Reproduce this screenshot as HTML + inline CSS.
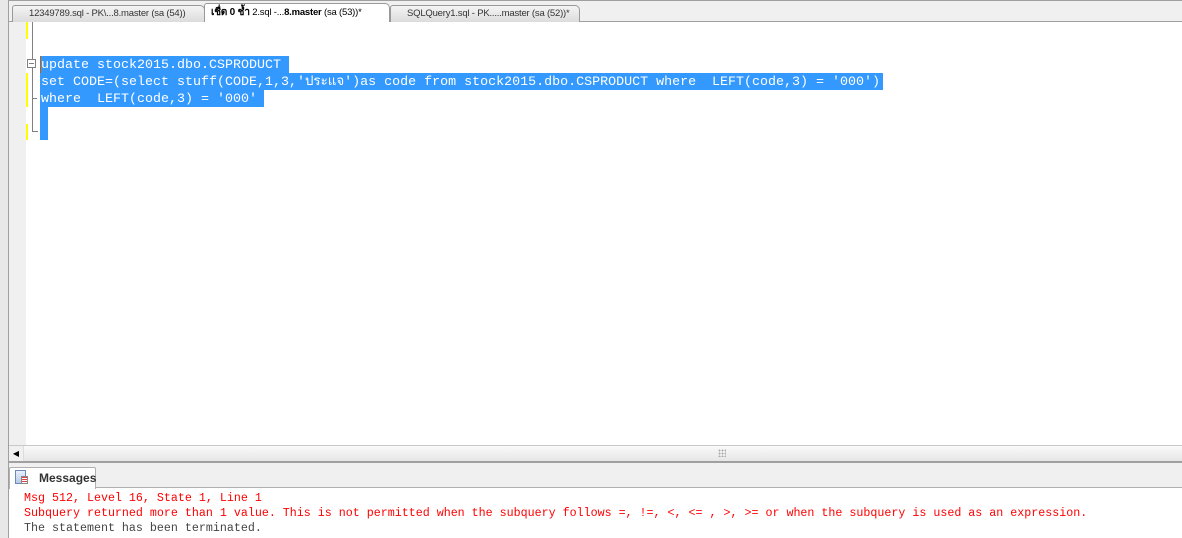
<!DOCTYPE html>
<html><head><style>
*{margin:0;padding:0;box-sizing:border-box}
body{width:1182px;height:538px;overflow:hidden;background:#fff;position:relative;font-family:"Liberation Sans",sans-serif}
.a{position:absolute}
.tab{position:absolute;top:5px;height:17px;font-size:9.5px;letter-spacing:-0.2px;color:#333;line-height:16px;white-space:nowrap;overflow:hidden;border:1px solid #999;border-bottom:none;border-radius:3px 5px 0 0;background:linear-gradient(#f4f4f4,#dcdcdc);padding-left:16px}
.code{font-family:"Liberation Mono",monospace;font-size:13.33px;line-height:17px;color:#fff;white-space:pre}
.sel{position:absolute;background:#3399ff}
.msg{font-family:"Liberation Mono",monospace;font-size:11.67px;line-height:15px;white-space:pre;position:absolute;left:24px}
</style></head><body>
<div class="a" style="left:0;top:0;width:8px;height:538px;background:#e8e8e8"></div>
<div class="a" style="left:8px;top:0;width:1px;height:538px;background:#a0a0a0"></div>
<div class="a" style="left:9px;top:0;width:1173px;height:22px;background:#f0f0f0;border-top:1px solid #a0a0a0;border-bottom:1px solid #a0a0a0"></div>
<div class="tab" style="left:12px;width:193px">12349789.sql - PK\...8.master (sa (54))</div>
<div class="tab" style="left:390px;width:190px">SQLQuery1.sql - PK.....master (sa (52))*</div>
<div class="tab" style="left:204px;top:3px;height:19px;width:186px;background:#fff;font-size:9.5px;color:#000;padding-left:6px;line-height:18px"><span style="font-family:'Liberation Sans','Noto Sans CJK JP',sans-serif;font-size:10px"><b>เชื่ต 0 ช้ำ</b></span> 2.sql -...<b>8.master</b> (sa (53))*</div>
<div class="a" style="left:9px;top:22px;width:17px;height:423px;background:#f0f0f0"></div>
<div class="a" style="left:26px;top:22px;width:2px;height:17px;background:#ffff00"></div>
<div class="a" style="left:26px;top:73px;width:2px;height:34px;background:#ffff00"></div>
<div class="a" style="left:26px;top:124px;width:2px;height:16px;background:#ffff00"></div>
<div class="a" style="left:32px;top:22px;width:1px;height:38px;background:#808080"></div>
<div class="a" style="left:27px;top:59px;width:9px;height:9px;border:1px solid #808080;background:#fff"></div>
<div class="a" style="left:29px;top:63px;width:5px;height:1px;background:#808080"></div>
<div class="a" style="left:32px;top:68px;width:1px;height:64px;background:#808080"></div>
<div class="a" style="left:32px;top:98px;width:5px;height:1px;background:#808080"></div>
<div class="a" style="left:32px;top:131px;width:6px;height:1px;background:#808080"></div>
<div class="sel" style="left:40px;top:56px;width:249px;height:17px"></div>
<div class="sel" style="left:40px;top:73px;width:843px;height:17px"></div>
<div class="sel" style="left:40px;top:90px;width:224px;height:17px"></div>
<div class="sel" style="left:40px;top:107px;width:8px;height:33px"></div>
<div class="a" style="left:40px;top:56px;width:1px;height:17px;background:#c06000"></div>
<div class="a code" style="left:41px;top:57px">update stock2015.dbo.CSPRODUCT
set CODE=(select stuff(CODE,1,3,'<span style="font-family:'Liberation Mono','Noto Sans CJK JP',monospace">ประแจ</span>')as code from stock2015.dbo.CSPRODUCT where  LEFT(code,3) = '000')
where  LEFT(code,3) = '000'</div>
<div class="a" style="left:9px;top:445px;width:1173px;height:1px;background:#c8c8c8"></div>
<div class="a" style="left:9px;top:446px;width:1173px;height:15px;background:linear-gradient(#fafafa,#e6e6e6)"></div>
<div class="a" style="left:9px;top:446px;width:15px;height:15px;background:#f0f0f0;border-right:1px solid #ddd;font-size:8px;line-height:15px;text-align:center;color:#000">◀</div>
<div class="a" style="left:718px;top:449px;width:8px;height:8px;background:radial-gradient(circle,#aaa 40%,transparent 50%) 0 0/3px 3px"></div>
<div class="a" style="left:9px;top:461px;width:1173px;height:2px;background:#a0a0a0"></div>
<div class="a" style="left:9px;top:463px;width:1173px;height:25px;background:#f0f0f0;border-bottom:1px solid #b0b0b0"></div>
<div class="a" style="left:9px;top:467px;width:87px;height:22px;background:#fff;border:1px solid #b0b0b0;border-bottom:none;border-radius:2px 2px 0 0;font-size:12px;font-weight:bold;color:#333;line-height:21px;padding-left:29px">Messages</div>
<div class="a" style="left:15px;top:470px;width:11px;height:14px;border:1px solid #6a8ab8;background:linear-gradient(#e8f0ff,#b8c8e8)"></div>
<div class="a" style="left:21px;top:476px;width:7px;height:8px;background:repeating-linear-gradient(#e04040 0 1px,#fff 1px 2px);border:1px solid #888"></div>
<div class="msg" style="top:491px;color:#f00">Msg 512, Level 16, State 1, Line 1
Subquery returned more than 1 value. This is not permitted when the subquery follows =, !=, &lt;, &lt;= , &gt;, &gt;= or when the subquery is used as an expression.</div>
<div class="msg" style="top:521px;color:#444">The statement has been terminated.</div>
</body></html>
